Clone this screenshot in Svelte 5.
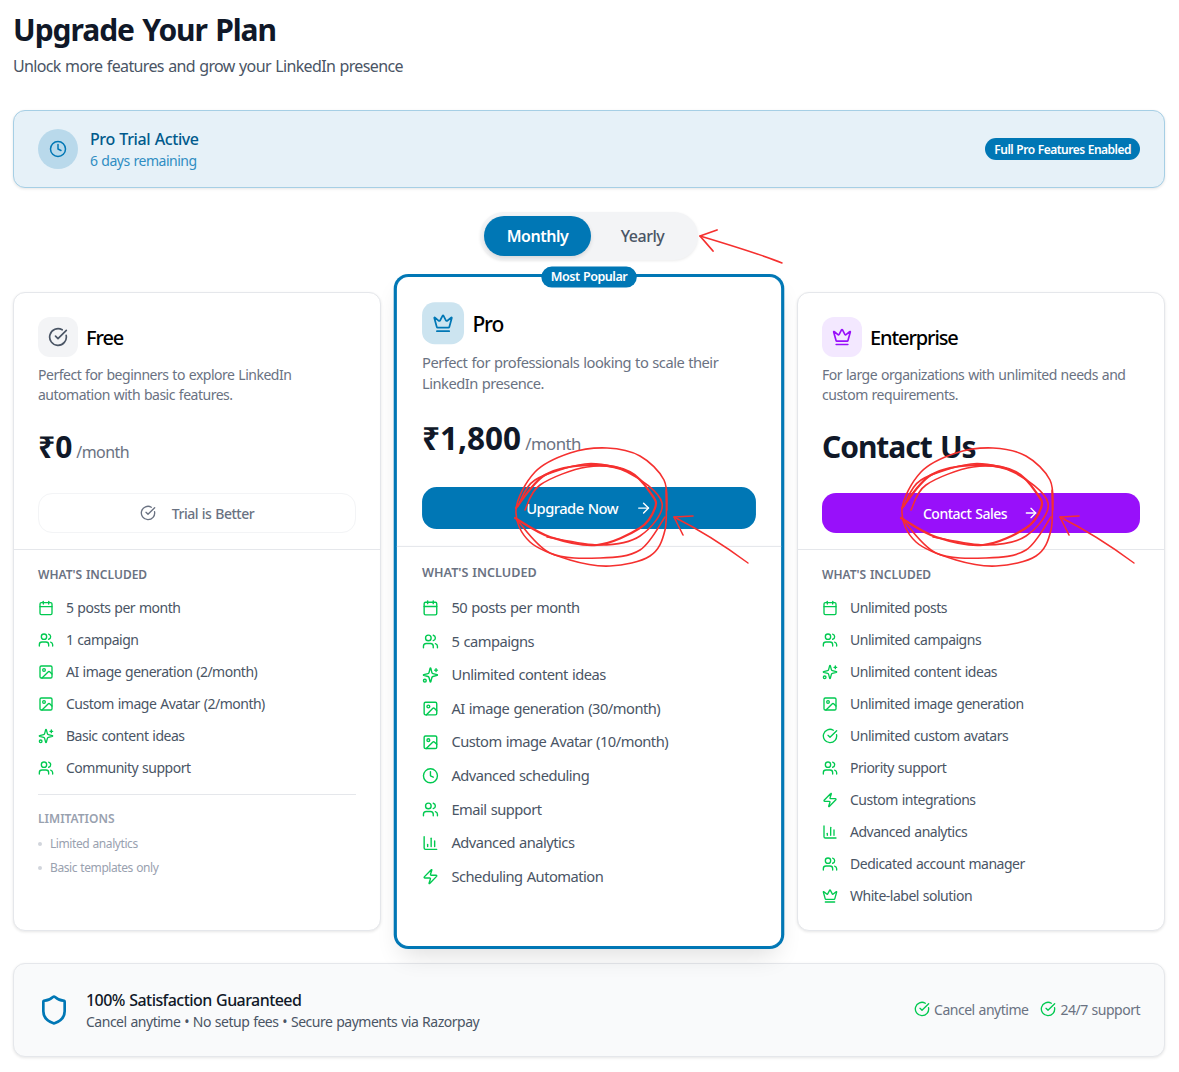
<script>
  const circle = (cx, cy, r) => `M${cx - r} ${cy}a${r} ${r} 0 1 0 ${2 * r} 0a${r} ${r} 0 1 0 ${-2 * r} 0`;

  const icons = {
    calendar: ["M5 4h14a2 2 0 0 1 2 2v14a2 2 0 0 1-2 2H5a2 2 0 0 1-2-2V6a2 2 0 0 1 2-2z", "M16 2v4", "M8 2v4", "M3 10h18"],
    users: ["M16 21v-2a4 4 0 0 0-4-4H6a4 4 0 0 0-4 4v2", circle(9, 7, 4), "M22 21v-2a4 4 0 0 0-3-3.87", "M16 3.13a4 4 0 0 1 0 7.75"],
    image: ["M5 3h14a2 2 0 0 1 2 2v14a2 2 0 0 1-2 2H5a2 2 0 0 1-2-2V5a2 2 0 0 1 2-2z", circle(9, 9, 2), "m21 15-3.086-3.086a2 2 0 0 0-2.828 0L6 21"],
    sparkles: ["M9.937 15.5A2 2 0 0 0 8.5 14.063l-6.135-1.582a.5.5 0 0 1 0-.962L8.5 9.936A2 2 0 0 0 9.937 8.5l1.582-6.135a.5.5 0 0 1 .963 0L14.063 8.5A2 2 0 0 0 15.5 9.937l6.135 1.581a.5.5 0 0 1 0 .964L15.5 14.063a2 2 0 0 0-1.437 1.437l-1.582 6.135a.5.5 0 0 1-.963 0z", "M20 3v4", "M22 5h-4", circle(4, 20, 2)],
    clock: [circle(12, 12, 10), "M12 6v6l4 2"],
    chart: ["M3 3v16a2 2 0 0 0 2 2h16", "M18 17V9", "M13 17V5", "M8 17v-3"],
    zap: ["M4 14a1 1 0 0 1-.78-1.63l9.9-10.2a.5.5 0 0 1 .86.46l-1.92 6.02A1 1 0 0 0 13 10h7a1 1 0 0 1 .78 1.63l-9.9 10.2a.5.5 0 0 1-.86-.46l1.92-6.02A1 1 0 0 0 11 14z"],
    check: ["M21.801 10A10 10 0 1 1 17 3.335", "m9 11 3 3L22 4"],
    crown: ["M11.562 3.266a.5.5 0 0 1 .876 0L15.39 8.87a1 1 0 0 0 1.516.294L21.183 5.5a.5.5 0 0 1 .798.519l-2.834 10.246a1 1 0 0 1-.956.734H5.81a1 1 0 0 1-.957-.734L2.02 6.02a.5.5 0 0 1 .798-.519l4.276 3.664a1 1 0 0 0 1.516-.294z", "M5 21h14"],
    arrow: ["M5 12h14", "m12 5 7 7-7 7"],
    shield: ["M20 13c0 5-3.5 7.5-7.66 8.95a1 1 0 0 1-.67-.01C7.5 20.5 4 18 4 13V6a1 1 0 0 1 1-1c2 0 4.5-1.2 6.24-2.72a1.17 1.17 0 0 1 1.52 0C14.51 3.81 17 5 19 5a1 1 0 0 1 1 1z"],
  };

  const plans = [
    {
      key: "free",
      name: "Free",
      icon: "check",
      desc: "Perfect for beginners to explore LinkedIn automation with basic features.",
      price: "₹0",
      per: "/month",
      cta: "Trial is Better",
      ctaIcon: "check",
      features: [
        ["calendar", "5 posts per month"],
        ["users", "1 campaign"],
        ["image", "AI image generation (2/month)"],
        ["image", "Custom image Avatar (2/month)"],
        ["sparkles", "Basic content ideas"],
        ["users", "Community support"],
      ],
      limits: ["Limited analytics", "Basic templates only"],
    },
    {
      key: "pro",
      name: "Pro",
      icon: "crown",
      desc: "Perfect for professionals looking to scale their LinkedIn presence.",
      price: "₹1,800",
      per: "/month",
      cta: "Upgrade Now",
      ctaIcon: "arrow",
      features: [
        ["calendar", "50 posts per month"],
        ["users", "5 campaigns"],
        ["sparkles", "Unlimited content ideas"],
        ["image", "AI image generation (30/month)"],
        ["image", "Custom image Avatar (10/month)"],
        ["clock", "Advanced scheduling"],
        ["users", "Email support"],
        ["chart", "Advanced analytics"],
        ["zap", "Scheduling Automation"],
      ],
    },
    {
      key: "enterprise",
      name: "Enterprise",
      icon: "crown",
      desc: "For large organizations with unlimited needs and custom requirements.",
      price: "Contact Us",
      cta: "Contact Sales",
      ctaIcon: "arrow",
      features: [
        ["calendar", "Unlimited posts"],
        ["users", "Unlimited campaigns"],
        ["sparkles", "Unlimited content ideas"],
        ["image", "Unlimited image generation"],
        ["check", "Unlimited custom avatars"],
        ["users", "Priority support"],
        ["zap", "Custom integrations"],
        ["chart", "Advanced analytics"],
        ["users", "Dedicated account manager"],
        ["crown", "White-label solution"],
      ],
    },
  ];

  // smooth line through hand-picked points, for the red pen marks
  const smooth = (pts) => {
    let d = `M${pts[0][0]} ${pts[0][1]}`;
    for (let i = 0; i < pts.length - 1; i++) {
      const p0 = pts[i - 1] || pts[i];
      const p1 = pts[i];
      const p2 = pts[i + 1];
      const p3 = pts[i + 2] || p2;
      const c1 = [p1[0] + (p2[0] - p0[0]) / 6, p1[1] + (p2[1] - p0[1]) / 6];
      const c2 = [p2[0] - (p3[0] - p1[0]) / 6, p2[1] - (p3[1] - p1[1]) / 6];
      d += `C${c1[0].toFixed(1)} ${c1[1].toFixed(1)} ${c2[0].toFixed(1)} ${c2[1].toFixed(1)} ${p2[0]} ${p2[1]}`;
    }
    return d;
  };

  const scribble = [
    [[667, 510], [664, 480], [640, 456], [607, 448], [570, 453], [535, 472], [516, 510], [530, 542], [570, 560], [610, 566], [650, 556], [665, 530], [666, 490]],
    [[516, 508], [545, 475], [590, 465], [630, 472], [652, 495], [655, 508], [640, 528], [597, 545], [550, 537], [515, 518]],
    [[525, 510], [540, 485], [587, 467], [627, 472], [662, 503], [640, 536], [600, 545], [547, 537]],
    [[517, 520], [550, 553], [600, 558], [640, 550], [665, 517]],
    [[518, 506], [535, 480], [585, 464], [620, 468]],
  ];
</script>

{#snippet icon(name, size, cls)}
  <svg class={cls} width={size} height={size} viewBox="0 0 24 24" fill="none" stroke="currentColor" stroke-width="2" stroke-linecap="round" stroke-linejoin="round">
    {#each icons[name] as d}
      <path {d} />
    {/each}
  </svg>
{/snippet}

<div class="page">
  <header>
    <h1>Upgrade Your Plan</h1>
    <p>Unlock more features and grow your LinkedIn presence</p>
  </header>

  <section class="trial">
    <div class="trial-left">
      <div class="trial-icon">{@render icon("clock", 18)}</div>
      <div>
        <div class="trial-title">Pro Trial Active</div>
        <div class="trial-sub">6 days remaining</div>
      </div>
    </div>
    <span class="trial-pill">Full Pro Features Enabled</span>
  </section>

  <div class="toggle-wrap">
    <div class="toggle">
      <button class="on">Monthly</button>
      <button>Yearly</button>
    </div>
  </div>

  <section class="plans">
    {#each plans as plan (plan.key)}
      <article class={`card ${plan.key}`}>
        {#if plan.key === "pro"}
          <span class="popular">Most Popular</span>
        {/if}
        <div class="top">
          <div class="name-row">
            <div class="plan-icon">{@render icon(plan.icon, 20)}</div>
            <h2>{plan.name}</h2>
          </div>
          <p class="desc">{plan.desc}</p>
          <div class="price">
            <span class="amount" class:num={plan.per}>{plan.price}</span>
            {#if plan.per}<span class="per">{plan.per}</span>{/if}
          </div>
          <button class="cta">
            {#if plan.ctaIcon === "check"}{@render icon("check", 16)}{/if}
            <span>{plan.cta}</span>
            {#if plan.ctaIcon === "arrow"}{@render icon("arrow", 16)}{/if}
          </button>
        </div>
        <div class="body">
          <h3>What's included</h3>
          <ul class="features">
            {#each plan.features as [ic, label]}
              <li>{@render icon(ic, 16, "tick")}<span>{label}</span></li>
            {/each}
          </ul>
          {#if plan.limits}
            <div class="limits">
              <h3>Limitations</h3>
              <ul>
                {#each plan.limits as label}
                  <li><i></i>{label}</li>
                {/each}
              </ul>
            </div>
          {/if}
        </div>
      </article>
    {/each}
  </section>

  <footer>
    <div class="guarantee">
      <span class="shield">{@render icon("shield", 32)}</span>
      <div>
        <div class="g-title">100% Satisfaction Guaranteed</div>
        <div class="g-sub">Cancel anytime • No setup fees • Secure payments via Razorpay</div>
      </div>
    </div>
    <div class="perks">
      <span>{@render icon("check", 16, "tick")}Cancel anytime</span>
      <span>{@render icon("check", 16, "tick")}24/7 support</span>
    </div>
  </footer>

  <svg class="marks" width="1179" height="1072" viewBox="0 0 1179 1072" fill="none" stroke="#f5302f" stroke-linecap="round" stroke-linejoin="round">
    <path stroke-width="1.5" d="M782 263C760 254 730 245 700 236" />
    <path stroke-width="1.8" d="M717 230L700 236L713 251" />
    {#each [0, 386] as dx}
      <g transform={`translate(${dx} 0)`}>
        {#each scribble as pts, i}
          <path stroke-width={i === 1 ? 2.2 : 1.6} d={smooth(pts)} />
        {/each}
        <path stroke-width="1.4" d="M748 563C725 546 700 530 674 517" />
        <path stroke-width="1.6" d="M693 516L674 517L683 535" />
      </g>
    {/each}
  </svg>
</div>

<style>
  :global(body) {
    background: #fff;
    font-family: "Noto Sans", "Open Sans", sans-serif;
    color: #101828;
  }

  /* Noto runs wider than the original face, pull it in everywhere */
  :global(body *) {
    letter-spacing: -0.035em;
    word-spacing: 0.05em;
  }

  .page {
    position: relative;
    width: 1152px;
    padding: 12px 14px 15px 13px;
  }

  h1 {
    margin: 0;
    font-size: 30px;
    line-height: 36px;
    font-weight: 700;
  }

  header p {
    margin: 6px 0 0;
    font-size: 16px;
    line-height: 24px;
    color: #4a5565;
    letter-spacing: -0.04em;
  }

  .trial {
    margin-top: 32px;
    height: 78px;
    box-sizing: border-box;
    padding: 0 24px;
    display: flex;
    align-items: center;
    justify-content: space-between;
    background: #e6f1f8;
    border: 1px solid #a6cfe5;
    border-radius: 12px;
    box-shadow: 0 1px 3px rgba(0, 0, 0, 0.1);
  }

  .trial-left {
    display: flex;
    align-items: center;
    gap: 12px;
  }

  .trial-icon {
    width: 40px;
    height: 40px;
    border-radius: 50%;
    background: #b9d9eb;
    color: #0077b5;
    display: flex;
    align-items: center;
    justify-content: center;
  }

  .trial-title {
    font-size: 16px;
    line-height: 24px;
    font-weight: 500;
    color: #005a8c;
    letter-spacing: -0.025em;
  }

  .trial-sub {
    font-size: 14px;
    line-height: 20px;
    color: #2f8dc2;
  }

  .trial-pill {
    background: #0077b5;
    color: #fff;
    font-size: 12px;
    line-height: 21px;
    font-weight: 600;
    padding: 1px 9px 0;
    border-radius: 11px;
    letter-spacing: -0.043em;
  }

  .toggle-wrap {
    margin-top: 24px;
    display: flex;
    justify-content: center;
  }

  .toggle {
    display: flex;
    padding: 4px;
    height: 48px;
    box-sizing: border-box;
    background: #f3f4f6;
    border-radius: 24px;
    box-shadow: 0 1px 3px rgba(0, 0, 0, 0.08);
  }

  .toggle button {
    width: 103px;
    border: none;
    background: none;
    border-radius: 20px;
    font: 500 16px "Noto Sans", sans-serif;
    letter-spacing: -0.03em;
    color: #4a5565;
  }

  .toggle button.on {
    width: 107px;
    background: #0077b5;
    color: #fff;
    font-weight: 600;
    box-shadow: 0 2px 4px rgba(0, 0, 0, 0.12);
  }

  .plans {
    margin-top: 32px;
    display: grid;
    grid-template-columns: repeat(3, 1fr);
    gap: 24px;
  }

  .card {
    position: relative;
    background: #fff;
    border: 1px solid #e5e7eb;
    border-radius: 12px;
    box-shadow: 0 1px 3px rgba(0, 0, 0, 0.1);
  }

  .card.pro {
    z-index: 1;
    border-color: #0077b5;
    box-shadow: 0 0 0 2px #0077b5, 0 12px 24px -6px rgba(0, 0, 0, 0.14);
    transform: scale(1.05);
  }

  .popular {
    position: absolute;
    top: 0;
    left: 50%;
    transform: translate(-50%, -50%);
    background: #0077b5;
    color: #fff;
    font-size: 12px;
    line-height: 20px;
    font-weight: 600;
    padding: 0 9px;
    border-radius: 10px;
    white-space: nowrap;
    letter-spacing: -0.04em;
  }

  .top {
    padding: 24px 24px 16px;
    border-bottom: 1px solid #e5e7eb;
  }

  .name-row {
    display: flex;
    align-items: center;
    gap: 8px;
  }

  .plan-icon {
    width: 40px;
    height: 40px;
    border-radius: 12px;
    display: flex;
    align-items: center;
    justify-content: center;
    background: #f3f4f6;
    color: #4a5565;
  }

  .pro .plan-icon {
    background: #cce4f0;
    color: #0077b5;
  }

  .enterprise .plan-icon {
    background: #f3e8ff;
    color: #9810fa;
  }

  h2 {
    margin: 2px 0 0;
    font-size: 20px;
    line-height: 28px;
    font-weight: 500;
    color: #000;
    letter-spacing: -0.055em;
  }

  .desc {
    margin: 8px 0 0;
    font-size: 14px;
    line-height: 20px;
    color: #6a7282;
  }

  .price {
    margin-top: 24px;
    height: 36px;
    display: flex;
    align-items: baseline;
    gap: 4px;
  }

  .amount {
    font-size: 30px;
    line-height: 36px;
    font-weight: 700;
  }

  .amount.num {
    letter-spacing: 0;
  }

  .per {
    font-size: 16px;
    color: #6a7282;
  }

  .cta {
    margin-top: 28px;
    width: 100%;
    height: 40px;
    border: none;
    border-radius: 14px;
    display: flex;
    align-items: center;
    justify-content: center;
    gap: 16px;
    font: 500 14px "Noto Sans", sans-serif;
    color: #fff;
  }

  .free .cta {
    background: #fff;
    border: 1px solid #f3f4f6;
    color: #6a7282;
  }

  .pro .cta {
    background: #0077b5;
  }

  .enterprise .cta {
    background: #9810fa;
  }

  .body {
    padding: 17px 24px 24px;
  }

  h3 {
    margin: 0;
    font-size: 12px;
    line-height: 16px;
    font-weight: 600;
    text-transform: uppercase;
    color: #6a7282;
    letter-spacing: 0;
  }

  ul {
    list-style: none;
    margin: 0;
    padding: 0;
  }

  .features {
    margin-top: 15px;
    display: flex;
    flex-direction: column;
    gap: 12px;
  }

  .features li {
    display: flex;
    align-items: center;
    gap: 12px;
    font-size: 14px;
    line-height: 20px;
    color: #4a5565;
  }

  :global(.tick) {
    flex: none;
    color: #00c950;
  }

  .limits {
    margin-top: 16px;
    padding-top: 16px;
    border-top: 1px solid #e5e7eb;
  }

  .limits h3 {
    color: #99a1af;
  }

  .limits ul {
    margin-top: 9px;
    display: flex;
    flex-direction: column;
    gap: 8px;
  }

  .limits li {
    display: flex;
    align-items: center;
    gap: 8px;
    font-size: 12px;
    line-height: 16px;
    color: #99a1af;
  }

  .limits i {
    width: 4px;
    height: 4px;
    border-radius: 50%;
    background: #d1d5dc;
  }

  footer {
    margin-top: 32px;
    height: 94px;
    box-sizing: border-box;
    padding: 0 24px;
    display: flex;
    align-items: center;
    justify-content: space-between;
    background: #f9fafb;
    border: 1px solid #e5e7eb;
    border-radius: 12px;
    box-shadow: 0 1px 3px rgba(0, 0, 0, 0.1);
  }

  .guarantee {
    display: flex;
    align-items: center;
    gap: 16px;
  }

  .shield {
    display: flex;
    color: #0077b5;
  }

  .g-title {
    font-size: 16px;
    line-height: 24px;
    font-weight: 500;
  }

  .g-sub {
    font-size: 14px;
    line-height: 20px;
    color: #4a5565;
  }

  .perks {
    display: flex;
    gap: 12px;
    margin-top: -2px;
    font-size: 14px;
    color: #6a7282;
  }

  .perks span {
    display: flex;
    align-items: center;
    gap: 4px;
  }

  .marks {
    position: absolute;
    top: 0;
    left: 0;
    z-index: 5;
    pointer-events: none;
  }
</style>
